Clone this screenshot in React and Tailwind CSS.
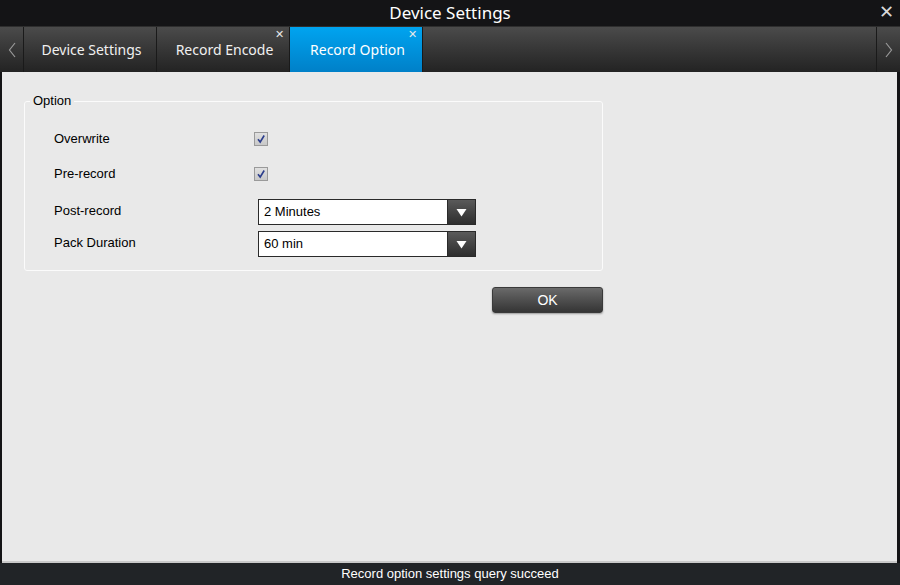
import React from "react";

const ui = { fontFamily: '"Noto Sans", "Open Sans", sans-serif' };
const arial = { fontFamily: '"Liberation Sans", Arial, sans-serif' };

function Tab({ label, active, closable }) {
    return (
        <div
            className={
                "relative flex h-full w-[133px] items-center justify-center border-r border-[#1a1a1a] text-[14px] " +
                (active
                    ? "bg-gradient-to-b from-[#00a4f0] to-[#0080c8] text-white"
                    : "bg-gradient-to-b from-[#4b4b4b] to-[#232323] text-[#f0f0f0]")
            }
        >
            <span className="pl-[3px]">{label}</span>
            {closable && (
                <span className="absolute right-[5px] top-[1px] text-[11px] leading-none text-[#e8e8e8]">
                    ✕
                </span>
            )}
        </div>
    );
}

function Check() {
    return (
        <div className="flex h-[14px] w-[14px] items-center justify-center border border-[#9a9a9a] bg-gradient-to-b from-[#e0e0e0] to-[#c8c8c8]">
            <svg width="10" height="10" viewBox="0 0 10 10">
                <path d="M2 5.2 L4.2 8 L8.2 1.5" fill="none" stroke="#2b3d8c" strokeWidth="1.6" />
            </svg>
        </div>
    );
}

function Select({ value }) {
    return (
        <div className="flex h-[26px] w-[218px] border border-[#2a2a2a] bg-white">
            <div className="flex flex-1 items-center pl-[5px] text-[13px] text-black">{value}</div>
            <div className="flex w-[28px] items-center justify-center border-l border-[#2a2a2a] bg-gradient-to-b from-[#5a5a5a] to-[#2e2e2e]">
                <svg width="11" height="9" viewBox="0 0 11 9">
                    <path d="M0.5 1 L10.5 1 L5.5 8.5 Z" fill="#ffffff" />
                </svg>
            </div>
        </div>
    );
}

export default function App() {
    return (
        <div className="flex h-[585px] w-[900px] flex-col bg-[#141416]" style={ui}>
            <div className="relative flex h-[26px] items-center justify-center text-[17px] text-white">
                Device Settings
                <span className="absolute right-[6px] top-[2px] text-[18px] leading-none text-[#d8d8d8]">✕</span>
            </div>
            <div className="flex h-[46px] border-t border-[#2e2e2e] bg-gradient-to-b from-[#4b4b4b] to-[#232323]">
                <div className="flex w-[24px] items-center justify-center border-r border-[#1a1a1a] text-[#9a9a9a]">
                    <svg width="8" height="16" viewBox="0 0 8 16">
                        <path d="M7 1 L1.5 8 L7 15" fill="none" stroke="#9a9a9a" strokeWidth="1.2" />
                    </svg>
                </div>
                <Tab label="Device Settings" />
                <Tab label="Record Encode" closable />
                <Tab label="Record Option" active closable />
                <div className="flex-1 border-r border-[#1a1a1a]" />
                <div className="flex w-[23px] items-center justify-center">
                    <svg width="8" height="16" viewBox="0 0 8 16">
                        <path d="M1 1 L6.5 8 L1 15" fill="none" stroke="#9a9a9a" strokeWidth="1.2" />
                    </svg>
                </div>
            </div>
            <div className="mx-[2px] mr-[3px] flex flex-1 flex-col border-b-2 border-[#c9c9c9] bg-[#e9e9e9] pl-[22px] pt-[29px]" style={arial}>
                <div className="relative h-[170px] w-[579px] rounded-[3px] border border-[#fbfbfb]">
                    <span className="absolute left-[5px] top-[-9px] bg-[#e9e9e9] px-[3px] text-[13px] leading-[16px] text-black">
                        Option
                    </span>
                    <div className="flex flex-col pl-[29px] pt-[28px] text-[13px] text-black">
                        <div className="flex h-[17px] items-center">
                            <span className="w-[200px]">Overwrite</span>
                            <Check />
                        </div>
                        <div className="mt-[18px] flex h-[17px] items-center">
                            <span className="w-[200px]">Pre-record</span>
                            <Check />
                        </div>
                        <div className="mt-[17px] flex h-[26px] items-start">
                            <span className="w-[204px] pt-[2px]">Post-record</span>
                            <Select value="2 Minutes" />
                        </div>
                        <div className="mt-[6px] flex h-[26px] items-start">
                            <span className="w-[204px] pt-[2px]">Pack Duration</span>
                            <Select value="60 min" />
                        </div>
                    </div>
                </div>
                <div className="flex w-[579px] justify-end pt-[16px]">
                    <button className="h-[26px] w-[111px] rounded-[3px] border border-[#3a3a3a] bg-gradient-to-b from-[#6a6a6a] to-[#353535] text-[14px] text-white shadow-[0_1px_2px_rgba(0,0,0,0.35)]">
                        OK
                    </button>
                </div>
            </div>
            <div className="flex h-[22px] items-center justify-center bg-[#212427] text-[13px] text-white" style={arial}>
                Record option settings query succeed
            </div>
        </div>
    );
}
